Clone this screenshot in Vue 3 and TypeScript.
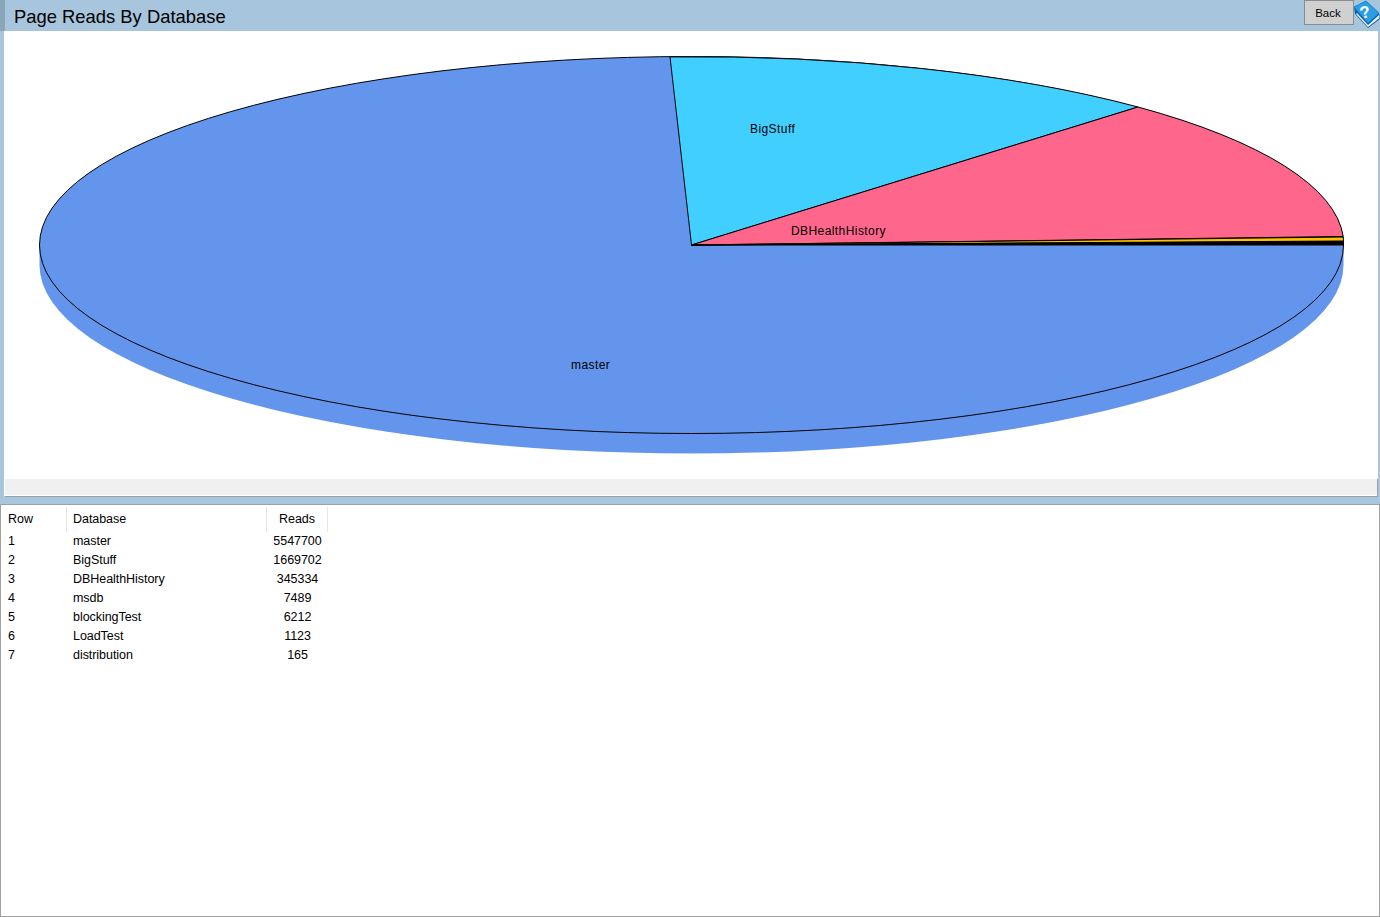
<script setup lang="ts">
interface Row { row: number; name: string; reads: number }
const rows: Row[] = [
  { row: 1, name: 'master', reads: 5547700 },
  { row: 2, name: 'BigStuff', reads: 1669702 },
  { row: 3, name: 'DBHealthHistory', reads: 345334 },
  { row: 4, name: 'msdb', reads: 7489 },
  { row: 5, name: 'blockingTest', reads: 6212 },
  { row: 6, name: 'LoadTest', reads: 1123 },
  { row: 7, name: 'distribution', reads: 165 },
]
</script>

<template>
  <div class="page">
    <header class="titlebar">
      <div class="marker"></div>
      <h1 class="title">Page Reads By Database</h1>
      <button class="back">Back</button>
      <svg class="help" viewBox="0 0 30 30" width="30" height="30">
        <path d="M4 7 L5 14 L18 28 L30 19 L29 13 L18 23 Z" fill="#0b5fa8" />
        <path d="M7 13 L18 25 L29 15 L29.5 18 L18 27 L6 14 Z" fill="#e8f4fc" />
        <path d="M4 7 L16 1 L29 13 L18 23 Z" fill="#2b9ee8" stroke="#1277c4" stroke-width="0.8" />
        <text x="0" y="0" class="qmark" transform="translate(11 19) rotate(-12)">?</text>
      </svg>
    </header>

    <section class="chart-panel">
      <svg class="chart" viewBox="0 0 1374 448" width="1374" height="448">
        <g transform="translate(-4 -31)">
          <path d="M39.5 245 V265 A652 188.5 0 0 0 1343.5 265 V245 Z" fill="#6495ed" />
          <ellipse cx="691.5" cy="245" rx="652" ry="188.5" fill="#6495ed" stroke="#000" stroke-width="1" />
          <path d="M691.5 245 L670 56.9 A652 188.5 0 0 1 1138 107 Z" fill="#40cfff" stroke="#000" stroke-width="1" />
          <path d="M691.5 245 L1138 107 A652 188.5 0 0 1 1343.2 236.5 Z" fill="#ff668c" stroke="#000" stroke-width="1" />
          <path d="M691.5 245 L1343.2 237 L1343.5 241 Z" fill="#ffc000" stroke="#000" stroke-width="1" />
          <path d="M691.5 245 L1343.5 241.5 L1343.5 245 Z" fill="#000" stroke="#000" stroke-width="1" />
          <text x="750" y="133" class="lbl">BigStuff</text>
          <text x="791" y="235" class="lbl">DBHealthHistory</text>
          <text x="571" y="369" class="lbl">master</text>
        </g>
      </svg>
    </section>
    <div class="scrollbar"></div>
    <div class="splitter"></div>

    <section class="grid-panel">
      <div class="grid-row head">
        <div class="c c1 hc">Row</div>
        <div class="c c2 hc">Database</div>
        <div class="c c3 hc">Reads</div>
      </div>
      <div v-for="r in rows" :key="r.row" class="grid-row body">
        <div class="c c1">{{ r.row }}</div>
        <div class="c c2">{{ r.name }}</div>
        <div class="c c3">{{ r.reads }}</div>
      </div>
    </section>
  </div>
</template>

<style scoped>
.page {
  width: 1380px;
  height: 917px;
  display: flex;
  flex-direction: column;
  background: #a7c5dc;
  font-family: "Liberation Sans", Arial, sans-serif;
  color: #000;
  overflow: hidden;
}
.titlebar {
  height: 31px;
  display: flex;
  align-items: flex-start;
  flex: none;
  position: relative;
}
.marker {
  width: 5px;
  height: 31px;
  background: #8aa4b8;
  flex: none;
}
.title {
  margin: 4px 0 0 9px;
  font-size: 18.4px;
  line-height: 25px;
  font-weight: 400;
  flex: 1;
}
.back {
  width: 50px;
  height: 25px;
  margin-right: 26px;
  padding: 0 2px 0 0;
  background: #d0d0d0;
  border: 1px solid #8c8c8c;
  font: 11.5px "Liberation Sans", Arial, sans-serif;
  color: #000;
}
.help {
  position: absolute;
  right: 0;
  top: 0;
}
.qmark {
  font: bold 17px "Liberation Sans", Arial, sans-serif;
  fill: #fff;
}
.chart-panel {
  height: 448px;
  margin: 0 2px 0 4px;
  background: #fff;
  flex: none;
}
.chart { display: block; }
.lbl {
  font: 12px "Liberation Sans", Arial, sans-serif;
  letter-spacing: 0.42px;
  fill: #000;
}
.scrollbar {
  height: 17px;
  margin: 0 2px 0 4px;
  background: #f0f0f0;
  border-left: 1px solid #fff;
  border-right: 1px solid #a0a0a0;
  border-bottom: 1px solid #a0a0a0;
  box-shadow: inset 0 -1px 0 #fff;
  box-sizing: content-box;
  flex: none;
}
.splitter {
  height: 7px;
  flex: none;
}
.grid-panel {
  flex: 1;
  background: #fff;
  border: 1px solid #a0a0a0;
  box-sizing: border-box;
  font-size: 12.5px;
  letter-spacing: -0.05px;
}
.grid-row {
  display: grid;
  grid-template-columns: 66px 200px 61px;
}
.head {
  height: 24px;
  margin-top: 2px;
  align-items: stretch;
}
.body {
  height: 19px;
  line-height: 19px;
}
.head + .body { margin-top: 1px; }
.hc {
  line-height: 25px;
  border-right: 1px solid #e6e6e6;
}
.c1 { padding-left: 7px; }
.c2 { padding-left: 6px; }
.c3 { text-align: center; }
.c { box-sizing: border-box; white-space: nowrap; }
</style>
